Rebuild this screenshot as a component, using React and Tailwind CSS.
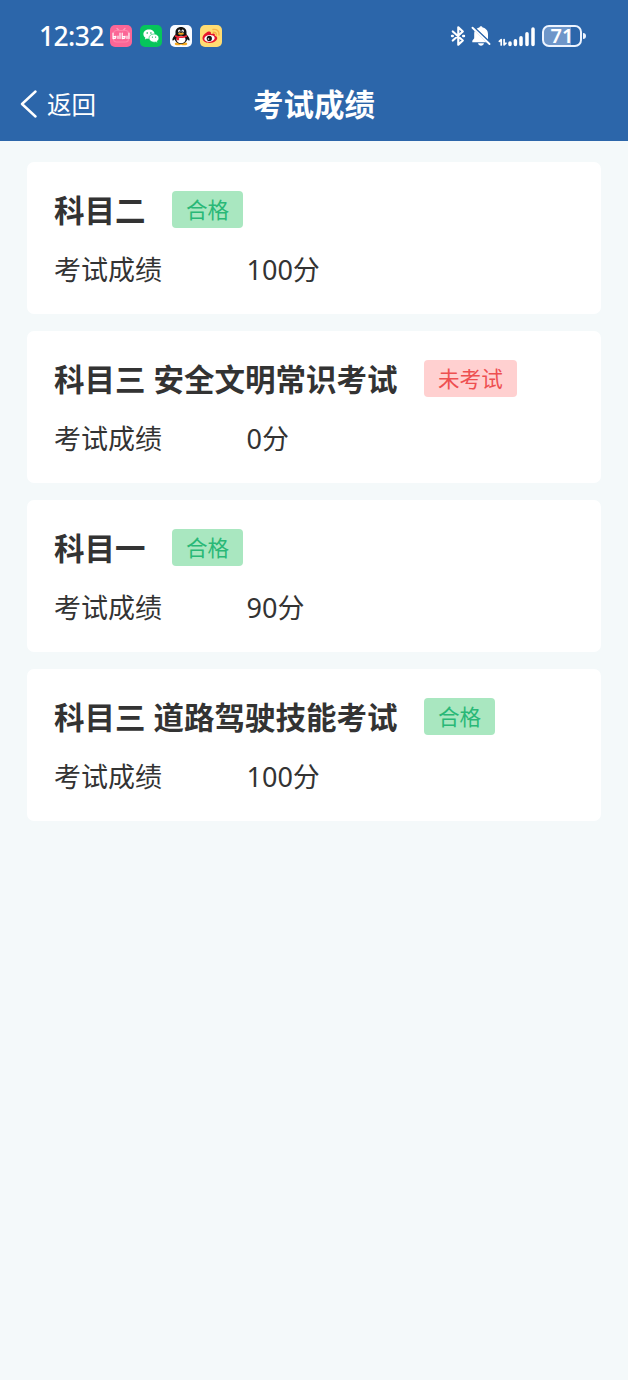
import React from "react";

const results = [
  { subject: "科目二", status: "合格", passed: true, score: 100 },
  { subject: "科目三 安全文明常识考试", status: "未考试", passed: false, score: 0 },
  { subject: "科目一", status: "合格", passed: true, score: 90 },
  { subject: "科目三 道路驾驶技能考试", status: "合格", passed: true, score: 100 },
];

function BiliIcon() {
  return (
    <svg className="size-[22px]" viewBox="0 0 22 22" fill="none">
      <rect width="22" height="22" rx="5" fill="#fb6696" />
      <path d="M7 3.5l2 2M15 3.5l-2 2" stroke="#ff9dbc" strokeWidth="1.3" strokeLinecap="round" />
      <rect x="3.5" y="5.5" width="15" height="11.5" rx="3" stroke="#ff83aa" strokeWidth="1.2" />
      <path
        d="M3 8v5.600l2.600-.5.300-1.700-2.600.3M8 11v2.500M10 8v5.500M12.200 8v5.600l2.600-.5.300-1.700-2.600.3M17 11v2.500M19 8v5.500"
        stroke="#fff" strokeWidth="1.1" strokeLinecap="round" strokeLinejoin="round"
      />
    </svg>
  );
}

function WechatIcon() {
  return (
    <svg className="size-[22px]" viewBox="0 0 22 22">
      <rect width="22" height="22" rx="5" fill="#06c55b" />
      <path d="M9 4.6c-3.2 0-5.6 2-5.6 4.6 0 1.5.8 2.7 2 3.5l-.5 1.7 2-1c.7.2 1.4.3 2.1.3 3.200 0 5.600-2 5.600-4.500S12.200 4.600 9 4.600z" fill="#fff" />
      <path d="M14 9c-2.900 0-5 1.800-5 4.100s2.100 4.100 5 4.100c.6 0 1.200-.1 1.700-.2l1.800.9-.5-1.500c1.200-.8 1.900-1.900 1.900-3.300C18.900 10.800 16.800 9 14 9z" fill="#fff" stroke="#06c55b" strokeWidth=".6" />
      <g fill="#06a84d">
        <circle cx="7.200" cy="8" r=".8" /><circle cx="10.900" cy="8" r=".8" />
        <circle cx="12.400" cy="12.100" r=".65" /><circle cx="15.600" cy="12.100" r=".65" />
      </g>
    </svg>
  );
}

function QQIcon() {
  return (
    <svg className="size-[22px]" viewBox="0 0 22 22">
      <rect width="22" height="22" rx="5" fill="#f8fbff" />
      <ellipse cx="8" cy="18.700" rx="3.200" ry="1.500" fill="#f6a81c" />
      <ellipse cx="14" cy="18.700" rx="3.200" ry="1.500" fill="#f6a81c" />
      <path d="M11 2c-3.200 0-5.500 2.200-5.500 5.200v2c-1.700 1.800-3.300 4-3.100 5.800.1 1 1.200.6 2.200-.7.7 2.600 3.100 4.600 6.400 4.600s5.700-2 6.400-4.600c1 1.300 2.100 1.700 2.200.7.200-1.800-1.400-4-3.100-5.800v-2c0-3-2.300-5.200-5.500-5.200z" fill="#111" />
      <ellipse cx="11" cy="14.500" rx="4.500" ry="3.800" fill="#fff" />
      <ellipse cx="9.300" cy="6" rx="1.200" ry="1.600" fill="#fff" />
      <ellipse cx="12.700" cy="6" rx="1.200" ry="1.600" fill="#fff" />
      <circle cx="9.600" cy="6.200" r=".55" fill="#111" /><circle cx="12.400" cy="6.200" r=".55" fill="#111" />
      <ellipse cx="11" cy="8.800" rx="3" ry="1" fill="#f6a81c" />
      <path d="M5.300 10c3.400 1.700 8 1.700 11.400 0l.4 1.700c-2.200 1.100-5.300 1.500-8 1.200v2.300H6.600v-2.700l-1.700-.7z" fill="#ed2435" />
    </svg>
  );
}

function WeiboIcon() {
  return (
    <svg className="size-[22px]" viewBox="0 0 22 22" fill="none">
      <rect width="22" height="22" rx="5" fill="#ffdc73" />
      <path d="M8.600 6.500C6 7.200 2.500 10.400 2.500 13.300c0 2.900 3.400 4.700 7.100 4.700 4.700 0 7.600-2.500 7.600-4.900 0-1.500-1.200-2.300-2.500-2.700.5-1.500-.1-2.700-3.800-1.300.4-1.700-.3-3-2.300-2.600z" fill="#e6162d" />
      <ellipse cx="9.500" cy="13.400" rx="5.200" ry="3.400" fill="#fff" transform="rotate(-7 9.500 13.400)" />
      <circle cx="9.300" cy="13.400" r="2.600" fill="#151515" />
      <circle cx="8.500" cy="14" r=".8" fill="#fff" />
      <path d="M13.300 7.300c1.800-.4 3.300.8 3.100 2.700M13 4.500c3.600-.8 6.600 1.800 6 5.500" stroke="#f7b247" strokeWidth="1.400" strokeLinecap="round" />
    </svg>
  );
}

function BluetoothIcon() {
  return (
    <svg className="h-[22px] w-4" viewBox="0 0 16 22" fill="none" stroke="#fff" strokeLinecap="round" strokeLinejoin="round">
      <path d="M2.800 6.500l10 9L8.300 19.700V2.300l4.500 4.200-10 9" strokeWidth="2.200" />
      <path d="M2 11h.8M13.200 11h.8" strokeWidth="2.400" />
    </svg>
  );
}

function MutedBellIcon() {
  return (
    <svg className="h-[22px] w-5" viewBox="0 0 20 22">
      <path d="M10 1.300c-.9 0-1.500.6-1.600 1.300-1.200.2-2.200.7-3 1.400l11.600 10.400V8.900c0-3.200-2.200-5.700-5.400-6.300-.1-.7-.700-1.300-1.600-1.300z" fill="#fff" />
      <path d="M3.700 6c-.4.800-.5 1.900-.5 2.900v4.400L1.300 15.800v1.400h14.200z" fill="#fff" />
      <path d="M7 18.300h6c-.3 1.500-1.500 2.400-3 2.400s-2.700-.9-3-2.400z" fill="#fff" />
      <path d="M2.700 1.700l17 16.300" stroke="#2c66aa" strokeWidth="1.400" />
      <path d="M1.500 2.700l17 16.300" stroke="#fff" strokeWidth="1.900" strokeLinecap="round" />
    </svg>
  );
}

function SignalIcon() {
  return (
    <svg className="h-[22px] w-[38px]" viewBox="0 0 38 22" fill="none" stroke="#fff" strokeLinecap="round">
      <path d="M1.300 16.300l1.900-1.700v5.400M8 18.200l-1.900 1.700v-5.400" strokeWidth="1.700" strokeLinejoin="round" />
      <path d="M12 18v1.500M17.400 15.700v3.800M23 12.700v6.800M29 8.700v10.800M35 3.900v15.600" strokeWidth="3.500" />
    </svg>
  );
}

function Battery() {
  return (
    <div className="flex items-center gap-[1px]">
      <div className="flex h-[22px] w-10 items-center justify-center rounded-[7px] border-2 border-[#edf4ff] bg-linear-to-r from-[#6e96c9] from-75% to-[#2c66aa] to-75% font-['Noto_Sans',sans-serif] text-[20px] leading-none font-semibold text-white">
        71
      </div>
      <div className="h-[6px] w-[3px] rounded-r-full bg-[#edf4ff]" />
    </div>
  );
}

function StatusBar() {
  return (
    <div className="flex h-[72px] items-center justify-between pr-[42px] pl-[39px]">
      <div className="flex items-center">
        <span className="w-[71px] font-['Noto_Sans',sans-serif] text-[26.500px] leading-9 font-medium tracking-[-0.6px]">12:32</span>
        <div className="flex gap-2">
          <BiliIcon />
          <WechatIcon />
          <QQIcon />
          <WeiboIcon />
        </div>
      </div>
      <div className="flex items-center">
        <BluetoothIcon />
        <div className="ml-[5px] flex"><MutedBellIcon /></div>
        <div className="mr-[6px] ml-[7px] flex"><SignalIcon /></div>
        <Battery />
      </div>
    </div>
  );
}

function ResultCard({ subject, status, passed, score }) {
  return (
    <section className="h-[152px] rounded-[7px] bg-white px-[27px] pt-[29px]">
      <div className="flex h-[36.500px] items-center">
        <h2 className="pb-[1px] text-[30.500px] leading-9 font-bold [word-spacing:1px] whitespace-pre">{subject}</h2>
        <span
          className={`ml-[26.500px] flex h-[36.500px] items-center rounded-[4px] px-[14px] pb-[1px] text-[21.600px] leading-8 ${
            passed ? "bg-[#a9e7c0] text-[#29b877]" : "bg-[#ffd0d0] text-[#ee4f50]"
          }`}
        >
          {status}
        </span>
      </div>
      <div className="mt-[21px] flex h-10 items-baseline text-[27px] leading-10">
        <span className="w-[192.500px]">考试成绩</span>
        <span className="font-['Noto_Sans','Noto_Sans_CJK_SC',sans-serif]">{score}分</span>
      </div>
    </section>
  );
}

export default function App() {
  return (
    <div className="min-h-[1380px] w-full bg-[#f4f9fa] font-['Noto_Sans_CJK_SC',sans-serif] text-[#333333]">
      <header className="h-[141px] bg-[#2c66aa] text-white">
        <StatusBar />
        <div className="grid h-16 grid-cols-3 items-center">
          <button className="flex items-center pl-5 text-[24.500px] leading-9">
            <svg className="mr-[9px] h-7 w-[18px]" viewBox="0 0 18 28" fill="none" stroke="currentColor" strokeWidth="2.400" strokeLinecap="round" strokeLinejoin="round">
              <path d="M15.500 1.500L2 14l13.500 12.500" />
            </svg>
            返回
          </button>
          <h1 className="pb-[2px] text-center text-[30.500px] leading-10 font-bold">考试成绩</h1>
        </div>
      </header>
      <main className="flex flex-col gap-[17px] px-[27px] pt-[21px]">
        {results.map((result) => (
          <ResultCard key={result.subject} {...result} />
        ))}
      </main>
    </div>
  );
}
